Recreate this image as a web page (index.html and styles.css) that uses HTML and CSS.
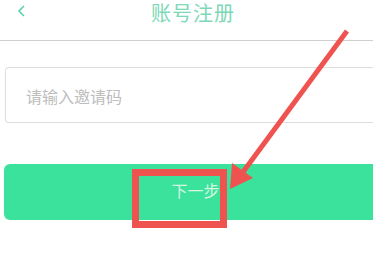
FILE: index.html
```html
<!DOCTYPE html>
<html lang="zh">
<head>
<meta charset="utf-8">
<link rel="stylesheet" href="styles.css">
</head>
<body>
<div class="screen">
  <div class="page">
    <header class="topbar">
      <span class="back">
        <svg width="9" height="12" viewBox="0 0 9 12"><path d="M7 1 L2 6 L7 11" fill="none" stroke="#5ccfad" stroke-width="1.6"/></svg>
      </span>
      <h1 class="title">账号注册</h1>
      <span></span>
    </header>
    <div class="divider"></div>
    <div class="field">请输入邀请码</div>
    <div class="btn">下一步</div>
  </div>
  <div class="mark-box"></div>
  <svg class="mark-arrow" width="389" height="270" viewBox="0 0 389 270">
    <line x1="347" y1="31" x2="243" y2="172" stroke="#ef5350" stroke-width="5"/>
    <polygon points="230,189 232,163 253,178" fill="#ef5350"/>
  </svg>
</div>
</body>
</html>
```
FILE: styles.css
```css
html, body {
  margin: 0;
  padding: 0;
  background: #fff;
}
body {
  font-family: "Noto Sans CJK SC", "Noto Sans", sans-serif;
}
.screen {
  position: relative;
  width: 389px;
  height: 270px;
}
.page {
  width: 373px;
}
.topbar {
  width: 373px;
  height: 40px;
  box-sizing: border-box;
  padding: 2px 0 0 13px;
  display: grid;
  grid-template-columns: 1fr auto 1fr;
  align-items: start;
}
.back {
  margin-left: -13px;
  padding-left: 17px;
  padding-top: 3px;
  display: flex;
}
.title {
  margin: 0;
  font-size: 20px;
  font-weight: 400;
  color: #7dd8b8;
  line-height: 22px;
  letter-spacing: 1px;
}
.divider {
  height: 1px;
  background: #cfcfcf;
  width: 373px;
}
.field {
  margin: 26px 0 0 5px;
  width: 368px;
  height: 56px;
  box-sizing: border-box;
  border: 1px solid #dedede;
  border-right: none;
  border-radius: 4px 0 0 4px;
  padding: 2px 0 0 20px;
  display: flex;
  align-items: center;
  font-size: 16px;
  color: #bdbdbd;
}
.btn {
  margin: 41px 0 0 4px;
  width: 369px;
  height: 56px;
  border-radius: 6px 0 0 6px;
  background: #3be29b;
  color: #d6f6e4;
  font-size: 16px;
  display: flex;
  align-items: center;
  justify-content: center;
  padding: 0 0 4px 14px;
  box-sizing: border-box;
}
.mark-box {
  position: absolute;
  left: 132px;
  top: 169px;
  width: 95px;
  height: 59px;
  box-sizing: border-box;
  border: 7px solid #ef5350;
}
.mark-arrow {
  position: absolute;
  left: 0;
  top: 0;
}
```
